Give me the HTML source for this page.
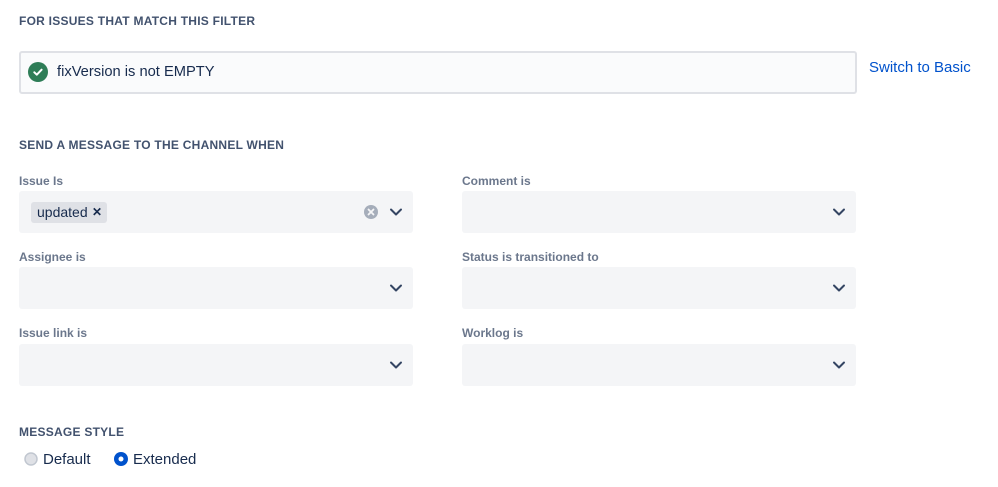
<!DOCTYPE html>
<html><head><meta charset="utf-8"><style>
*{margin:0;padding:0;box-sizing:border-box}
body{width:998px;height:487px;background:#fff;font-family:"Liberation Sans",sans-serif;position:relative;overflow:hidden;color:#172B4D}
.h{position:absolute;left:19px;font-size:12px;font-weight:bold;color:#42526E;letter-spacing:.25px}
.l{position:absolute;font-size:12px;font-weight:bold;color:#6B778C}
.s{position:absolute;width:394px;height:42px;background:#F4F5F7;border-radius:3px}
.s svg.c{position:absolute;right:9px;top:13px}
</style></head><body>
<div class="h" style="top:14px">FOR ISSUES THAT MATCH THIS FILTER</div>
<div style="position:absolute;left:19px;top:51px;width:838px;height:43px;border:2px solid #DFE1E6;border-radius:3px;background:#FAFBFC"></div>
<svg style="position:absolute;left:28px;top:62px" width="20" height="20"><circle cx="10" cy="10" r="10" fill="#2E7D57"/><path d="M6.3 10.3l2.5 2.4 4.8-5" stroke="#fff" stroke-width="2" fill="none" stroke-linecap="round" stroke-linejoin="round"/></svg>
<div style="position:absolute;left:57px;top:64px;font-size:14.7px">fixVersion is not EMPTY</div>
<div style="position:absolute;left:869px;top:59px;font-size:15px;color:#0052CC">Switch to Basic</div>
<div class="h" style="top:138px">SEND A MESSAGE TO THE CHANNEL WHEN</div>

<div class="l" style="left:19px;top:174px">Issue Is</div>
<div class="l" style="left:462px;top:174px">Comment is</div>
<div class="l" style="left:19px;top:250px">Assignee is</div>
<div class="l" style="left:462px;top:250px">Status is transitioned to</div>
<div class="l" style="left:19px;top:326px">Issue link is</div>
<div class="l" style="left:462px;top:326px">Worklog is</div>

<div class="s" style="left:19px;top:191px">
<div style="position:absolute;left:12px;top:11px;height:21px;width:76px;background:#DFE1E6;border-radius:3px;font-size:14px;line-height:21px;padding-left:6px">updated<span style="position:absolute;left:61px;top:0;font-size:12px;font-weight:bold">✕</span></div>
<svg style="position:absolute;left:345px;top:14px" width="14" height="14"><circle cx="7" cy="7" r="7" fill="#A5ADBA"/><path d="M4.5 4.5l5 5M9.5 4.5l-5 5" stroke="#F4F5F7" stroke-width="1.8" stroke-linecap="round"/></svg>
<svg class="c" width="16" height="16"><path d="M3 5.5l5 5 5-5" stroke="#344563" stroke-width="2" fill="none" stroke-linecap="round" stroke-linejoin="round"/></svg></div>
<div class="s" style="left:462px;top:191px"><svg class="c" width="16" height="16"><path d="M3 5.5l5 5 5-5" stroke="#344563" stroke-width="2" fill="none" stroke-linecap="round" stroke-linejoin="round"/></svg></div>
<div class="s" style="left:19px;top:267px"><svg class="c" width="16" height="16"><path d="M3 5.5l5 5 5-5" stroke="#344563" stroke-width="2" fill="none" stroke-linecap="round" stroke-linejoin="round"/></svg></div>
<div class="s" style="left:462px;top:267px"><svg class="c" width="16" height="16"><path d="M3 5.5l5 5 5-5" stroke="#344563" stroke-width="2" fill="none" stroke-linecap="round" stroke-linejoin="round"/></svg></div>
<div class="s" style="left:19px;top:344px"><svg class="c" width="16" height="16"><path d="M3 5.5l5 5 5-5" stroke="#344563" stroke-width="2" fill="none" stroke-linecap="round" stroke-linejoin="round"/></svg></div>
<div class="s" style="left:462px;top:344px"><svg class="c" width="16" height="16"><path d="M3 5.5l5 5 5-5" stroke="#344563" stroke-width="2" fill="none" stroke-linecap="round" stroke-linejoin="round"/></svg></div>

<div class="h" style="top:425px">MESSAGE STYLE</div>
<svg style="position:absolute;left:24px;top:452px" width="14" height="14"><circle cx="7" cy="7" r="6" fill="#DFE1E6" stroke="#C1C7D0" stroke-width="1.5"/></svg>
<div style="position:absolute;left:43px;top:451px;font-size:15px">Default</div>
<svg style="position:absolute;left:114px;top:452px" width="14" height="14"><circle cx="7" cy="7" r="7" fill="#0052CC"/><circle cx="7" cy="7" r="2.5" fill="#fff"/></svg>
<div style="position:absolute;left:133px;top:451px;font-size:15px">Extended</div>
</body></html>
